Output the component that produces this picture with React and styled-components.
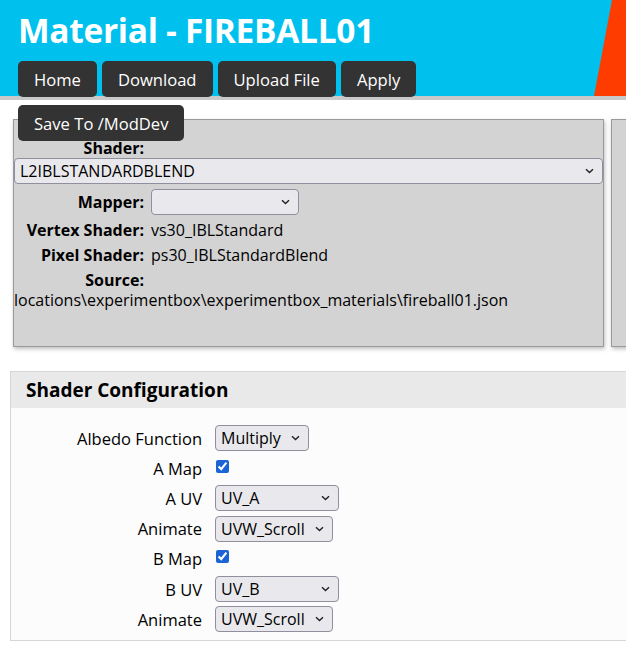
import styled, { createGlobalStyle } from "styled-components";

const GlobalStyle = createGlobalStyle`
  html, body {
    margin: 0;
    padding: 0;
    background: #ffffff;
    overflow-x: hidden;
  }
  body {
    font-family: "Open Sans", "Noto Sans", sans-serif;
    color: #000;
  }
`;

const colors = {
  header: "#00c1ee",
  accent: "#ff3c00",
  button: "#333333",
  panel: "#d3d3d3",
  selectBg: "#e9e9ed",
};

function Chevron() {
  return (
    <svg width="9" height="6" viewBox="0 0 9 6">
      <path d="M1 1.2 L4.5 4.6 L8 1.2" fill="none" stroke="#222" strokeWidth="1.4" />
    </svg>
  );
}

function Select({ value, width, size }) {
  return (
    <SelectWrap $width={width}>
      <NativeSelect $size={size} defaultValue={value}>
        <option value={value}>{value}</option>
      </NativeSelect>
      <ChevronSpot>
        <Chevron />
      </ChevronSpot>
    </SelectWrap>
  );
}

const navItems = ["Home", "Download", "Upload File", "Apply", "Save To /ModDev"];

const configRows = [
  { label: "Albedo Function", type: "select", value: "Multiply", width: 94 },
  { label: "A Map", type: "check" },
  { label: "A UV", type: "select", value: "UV_A", width: 124 },
  { label: "Animate", type: "select", value: "UVW_Scroll", width: 118 },
  { label: "B Map", type: "check" },
  { label: "B UV", type: "select", value: "UV_B", width: 124 },
  { label: "Animate", type: "select", value: "UVW_Scroll", width: 118 },
];

export default function App() {
  return (
    <>
      <GlobalStyle />
      <Header>
        <Title>Material - FIREBALL01</Title>
        <Nav>
          {navItems.map((item) => (
            <NavButton key={item}>{item}</NavButton>
          ))}
        </Nav>
        <AccentStripe />
      </Header>
      <Main>
        <PanelRow>
          <Panel>
            <Field>
              <FieldLabel>Shader:</FieldLabel>
              <Select value="L2IBLSTANDARDBLEND" width="100%" size={16} />
            </Field>
            <Field>
              <FieldLabel>Mapper:</FieldLabel>
              <Select value="" width={148} size={16} />
            </Field>
            <Field>
              <FieldLabel>Vertex Shader:</FieldLabel>
              <FieldValue>vs30_IBLStandard</FieldValue>
            </Field>
            <Field>
              <FieldLabel>Pixel Shader:</FieldLabel>
              <FieldValue>ps30_IBLStandardBlend</FieldValue>
            </Field>
            <Field>
              <FieldLabel>Source:</FieldLabel>
              <FieldValue>
                locations\experimentbox\experimentbox_materials\fireball01.json
              </FieldValue>
            </Field>
          </Panel>
          <Panel $side />
        </PanelRow>

        <Card>
          <CardHeader>Shader Configuration</CardHeader>
          <CardBody>
            {configRows.map((row, i) => (
              <ConfigRow key={i}>
                <ConfigLabel>{row.label}</ConfigLabel>
                {row.type === "select" ? (
                  <Select value={row.value} width={row.width} size={16} />
                ) : (
                  <Check type="checkbox" defaultChecked />
                )}
              </ConfigRow>
            ))}
          </CardBody>
        </Card>
      </Main>
    </>
  );
}

const Header = styled.header`
  position: relative;
  height: 96px;
  background: ${colors.header};
  border-bottom: 4px solid #c9c9c9;
  padding: 0 18px;
  box-sizing: content-box;
  z-index: 2;
`;

const Title = styled.h1`
  margin: 0;
  padding-top: 8px;
  font-size: 33.5px;
  line-height: 44px;
  font-weight: 700;
  color: #ffffff;
  letter-spacing: -0.3px;
`;

const Nav = styled.nav`
  display: flex;
  flex-wrap: wrap;
  gap: 8px 5px;
  width: 405px;
  margin-top: 9px;
`;

const NavButton = styled.button`
  background: ${colors.button};
  color: #ffffff;
  border: none;
  border-radius: 5px;
  height: 36px;
  padding: 0 16px;
  font-family: inherit;
  font-size: 16.6px;
  cursor: pointer;
`;

const AccentStripe = styled.div`
  position: absolute;
  top: 0;
  right: 0;
  width: 32px;
  height: 96px;
  background: ${colors.accent};
  clip-path: polygon(18px 0, 100% 0, 100% 100%, 0 100%);
`;

const Main = styled.main`
  overflow: hidden;
  padding: 19px 0 0 10px;
`;

const PanelRow = styled.div`
  display: flex;
  gap: 7px;
  padding-left: 3px;
`;

const Panel = styled.section`
  flex: 0 0 ${({ $side }) => ($side ? "200px" : "591px")};
  height: 228px;
  background: ${colors.panel};
  border: 1px solid #9a9a9a;
  box-shadow: 1px 2px 4px rgba(0, 0, 0, 0.25);
  padding-top: 15.5px;
  box-sizing: border-box;
  font-size: 16px;
`;

const Field = styled.div`
  display: flex;
  flex-wrap: wrap;
  align-items: center;
  column-gap: 7px;
  padding: 2.5px 0;
  line-height: 20px;
`;

const FieldLabel = styled.span`
  width: 130px;
  text-align: right;
  font-weight: 700;
`;

const FieldValue = styled.span`
  white-space: nowrap;
`;

const SelectWrap = styled.span`
  position: relative;
  display: inline-flex;
  width: ${({ $width }) => (typeof $width === "number" ? `${$width}px` : $width)};
`;

const NativeSelect = styled.select`
  appearance: none;
  width: 100%;
  height: 26px;
  box-sizing: border-box;
  padding: 0 22px 0 5px;
  background: ${colors.selectBg};
  border: 1px solid #8f8f9d;
  border-radius: 4px;
  font-family: inherit;
  font-size: ${({ $size }) => $size}px;
  color: #000;
`;

const ChevronSpot = styled.span`
  position: absolute;
  right: 9px;
  top: 10px;
  display: flex;
  pointer-events: none;
`;

const Card = styled.section`
  width: 640px;
  margin-top: 24px;
  border-top: 1px solid #d6d6d6;
  border-left: 1px solid #d6d6d6;
  border-bottom: 1px solid #d6d6d6;
`;

const CardHeader = styled.h2`
  margin: 0;
  height: 36px;
  line-height: 36px;
  padding-left: 15px;
  background: #e9e9e9;
  font-size: 19px;
  font-weight: 700;
`;

const CardBody = styled.div`
  background: #fcfcfd;
  padding: 15px 0 6px;
`;

const ConfigRow = styled.div`
  display: grid;
  grid-template-columns: 191px auto;
  column-gap: 13px;
  align-items: center;
  justify-content: start;
  min-height: 30.2px;
  font-size: 16.5px;
`;

const ConfigLabel = styled.span`
  text-align: right;
`;

const Check = styled.input`
  margin: 0 0 4px 1px;
  width: 13px;
  height: 13px;
  accent-color: #1b64d6;
`;
